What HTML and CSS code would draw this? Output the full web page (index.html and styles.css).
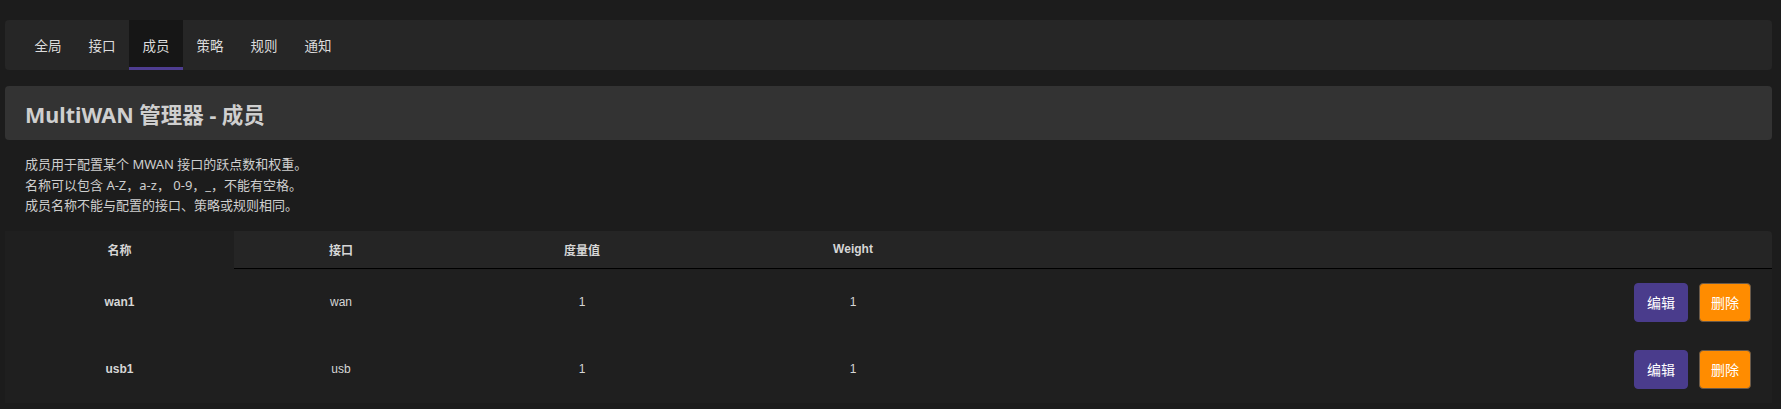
FILE: index.html
```html
<!DOCTYPE html>
<html lang="zh-CN">
<head>
<meta charset="utf-8">
<title>MultiWAN 管理器 - 成员</title>
<link rel="stylesheet" href="styles.css">
</head>
<body>
<nav class="tabs">
  <a class="tab">全局</a>
  <a class="tab">接口</a>
  <a class="tab active">成员</a>
  <a class="tab">策略</a>
  <a class="tab">规则</a>
  <a class="tab">通知</a>
</nav>
<h2 class="title">MultiWAN 管理器 - 成员</h2>
<div class="desc">
  <div>成员用于配置某个 MWAN 接口的跃点数和权重。</div>
  <div>名称可以包含 A-Z，a-z， 0-9，_，不能有空格。</div>
  <div>成员名称不能与配置的接口、策略或规则相同。</div>
</div>
<div class="table">
  <div class="row head">
    <div class="cell first">名称</div>
    <div class="cell">接口</div>
    <div class="cell">度量值</div>
    <div class="cell">Weight</div>
    <div class="cell"></div>
  </div>
  <div class="row">
    <div class="cell name">wan1</div>
    <div class="cell">wan</div>
    <div class="cell">1</div>
    <div class="cell">1</div>
    <div class="cell actions"><button class="btn edit">编辑</button><button class="btn del">删除</button></div>
  </div>
  <div class="row">
    <div class="cell name">usb1</div>
    <div class="cell">usb</div>
    <div class="cell">1</div>
    <div class="cell">1</div>
    <div class="cell actions"><button class="btn edit">编辑</button><button class="btn del">删除</button></div>
  </div>
</div>
</body>
</html>
```
FILE: styles.css
```css
html, body {
  margin: 0;
  padding: 0;
  background: #1c1c1c;
  color: #d0d0d0;
  font-family: "Noto Sans", "Noto Sans CJK SC", sans-serif;
}
body {
  padding: 20px 9px 0 5px;
}
.tabs {
  display: flex;
  height: 50px;
  background: #262626;
  border-radius: 4px;
  padding-left: 16px;
}
.tab {
  display: flex;
  align-items: center;
  padding: 0 13.5px;
  font-size: 13.5px;
  color: #dcdcdc;
  border-bottom: 3px solid transparent;
  box-sizing: border-box;
  padding-top: 3px;
}
.tab.active {
  background: #161616;
  border-bottom-color: #4e3d90;
}
.title {
  margin: 16px 0 0;
  height: 54px;
  box-sizing: border-box;
  display: flex;
  align-items: center;
  padding-left: 20px;
  background: #333333;
  border-radius: 4px;
  font-size: 21.5px;
  font-weight: bold;
  color: #cfcfcf;
}
.desc {
  padding: 14px 20px 15px 20px;
  font-size: 13px;
  line-height: 20.5px;
  color: #cfcfcf;
}
.table {
  background: #1f1f1f;
  border-radius: 4px 4px 0 0;
  font-family: "Liberation Sans", "Noto Sans CJK SC", sans-serif;
  font-size: 12px;
  color: #d6d6d6;
}
.row {
  display: grid;
  grid-template-columns: 229px 214px 268px 274px 1fr;
  align-items: center;
  height: 67px;
}
.row.head {
  height: 38px;
  font-weight: bold;
}
.row.head .cell {
  background: #252525;
  height: 100%;
  display: flex;
  align-items: center;
  justify-content: center;
  border-bottom: 1px solid #000;
  box-sizing: border-box;
}
.row.head .cell.first {
  background: #1f1f1f;
  border-bottom-color: #1f1f1f;
}
.row.head .cell:last-child {
  border-top-right-radius: 4px;
}
.cell {
  text-align: center;
}
.cell.name {
  font-weight: bold;
}
.cell.actions {
  display: flex;
  justify-content: flex-end;
  gap: 11px;
  padding-right: 21px;
}
.btn {
  height: 39px;
  border-radius: 4px;
  font-family: "Noto Sans", "Noto Sans CJK SC", sans-serif;
  font-size: 14px;
  color: #ffffff;
  padding: 0;
  cursor: pointer;
}
.btn.edit {
  width: 54px;
  background: #4a3c8c;
  border: 1px solid #4a3c8c;
}
.btn.del {
  width: 52px;
  background: #ff8c00;
  border: 1px solid #6a5a4a;
}
```
